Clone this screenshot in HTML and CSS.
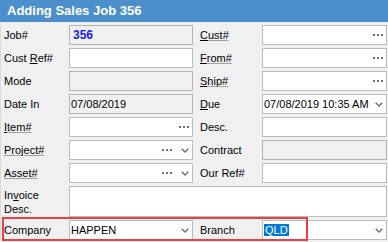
FILE: index.html
```html
<!DOCTYPE html>
<html lang="en">
<head>
    <meta charset="UTF-8">
    <title>Adding Sales Job 356</title>
    <link rel="stylesheet" href="styles.css">
</head>
<body>
    <div class="window">
        <div class="titlebar">Adding Sales Job 356</div>

        <div class="form">
            <!-- row 1 -->
            <div class="label"><span>Job#</span></div>
            <div class="field readonly"><span class="val job-no">356</span></div>
            <div class="label right"><span class="link"><u>C</u>ust#</span></div>
            <div class="field">
                <span class="val"></span>
                <svg class="dots" width="10" height="2"><rect x="0" y="0" width="2" height="2"/><rect x="4" y="0" width="2" height="2"/><rect x="8" y="0" width="2" height="2"/></svg>
            </div>

            <!-- row 2 -->
            <div class="label"><span>Cust <u>R</u>ef#</span></div>
            <div class="field"><span class="val"></span></div>
            <div class="label right"><span class="link"><u>F</u>rom#</span></div>
            <div class="field">
                <span class="val"></span>
                <svg class="dots" width="10" height="2"><rect x="0" y="0" width="2" height="2"/><rect x="4" y="0" width="2" height="2"/><rect x="8" y="0" width="2" height="2"/></svg>
            </div>

            <!-- row 3 -->
            <div class="label"><span>Mode</span></div>
            <div class="field readonly"><span class="val"></span></div>
            <div class="label right"><span class="link"><u>S</u>hip#</span></div>
            <div class="field">
                <span class="val"></span>
                <svg class="dots" width="10" height="2"><rect x="0" y="0" width="2" height="2"/><rect x="4" y="0" width="2" height="2"/><rect x="8" y="0" width="2" height="2"/></svg>
            </div>

            <!-- row 4 -->
            <div class="label"><span>Date In</span></div>
            <div class="field readonly"><span class="val">07/08/2019</span></div>
            <div class="label right"><span><u>D</u>ue</span></div>
            <div class="field">
                <span class="val">07/08/2019 10:35 AM</span>
                <svg class="chev tight" width="8" height="5"><polyline points="0.7,0.7 4,4 7.3,0.7"/></svg>
            </div>

            <!-- row 5 -->
            <div class="label"><span class="link"><u>I</u>tem#</span></div>
            <div class="field">
                <span class="val"></span>
                <svg class="dots" width="10" height="2"><rect x="0" y="0" width="2" height="2"/><rect x="4" y="0" width="2" height="2"/><rect x="8" y="0" width="2" height="2"/></svg>
            </div>
            <div class="label right"><span>Desc.</span></div>
            <div class="field"><span class="val"></span></div>

            <!-- row 6 -->
            <div class="label"><span class="link">Project#</span></div>
            <div class="field">
                <span class="val"></span>
                <svg class="dots" width="10" height="2"><rect x="0" y="0" width="2" height="2"/><rect x="4" y="0" width="2" height="2"/><rect x="8" y="0" width="2" height="2"/></svg>
                <svg class="chev" width="8" height="5"><polyline points="0.7,0.7 4,4 7.3,0.7"/></svg>
            </div>
            <div class="label right"><span>Contract</span></div>
            <div class="field readonly"><span class="val"></span></div>

            <!-- row 7 -->
            <div class="label"><span class="link">Asset#</span></div>
            <div class="field">
                <span class="val"></span>
                <svg class="dots" width="10" height="2"><rect x="0" y="0" width="2" height="2"/><rect x="4" y="0" width="2" height="2"/><rect x="8" y="0" width="2" height="2"/></svg>
                <svg class="chev" width="8" height="5"><polyline points="0.7,0.7 4,4 7.3,0.7"/></svg>
            </div>
            <div class="label right"><span>Our Ref#</span></div>
            <div class="field"><span class="val"></span></div>

            <!-- row 8 -->
            <div class="label multi">In<u>v</u>oice<br>Desc.</div>
            <div class="field memo"></div>

            <!-- row 9 -->
            <div class="label"><span>Company</span></div>
            <div class="field">
                <span class="val">HAPPEN</span>
                <svg class="chev" width="8" height="5"><polyline points="0.7,0.7 4,4 7.3,0.7"/></svg>
            </div>
            <div class="label right"><span>Branch</span></div>
            <div class="field">
                <span class="val"><span class="selected">QLD</span></span>
                <svg class="chev" width="8" height="5"><polyline points="0.7,0.7 4,4 7.3,0.7"/></svg>
            </div>
        </div>

        <div class="callout"></div>
    </div>
</body>
</html>
```

FILE: styles.css
```css
* {
    margin: 0;
    padding: 0;
    box-sizing: border-box;
}

body {
    font-family: "Liberation Sans", Arial, sans-serif;
    font-size: 11px;
    color: #000;
    background: #f0f0f0;
    width: 388px;
    height: 242px;
    overflow: hidden;
}

.window {
    position: relative;
    height: 242px;
}

.titlebar {
    height: 22px;
    background: #4b8fcc;
    color: #fff;
    font-weight: bold;
    font-size: 13px;
    line-height: 22px;
    padding-left: 7px;
}

.form {
    display: grid;
    grid-template-columns: 64px 124px 69px 125px;
    grid-template-rows: repeat(7, 20px) 31px 20px;
    row-gap: 3px;
    padding: 3px 2px 0 4px;
    border-left: 1px solid #dadada;
}

.label {
    display: flex;
    align-items: center;
    white-space: nowrap;
    margin-left: -1px;
}

.label.right {
    padding-left: 8px;
}

.label.multi {
    display: block;
    align-self: start;
    padding-top: 2px;
    line-height: 14px;
}

.link {
    text-decoration: underline;
    text-decoration-color: #a0a0a0;
}

.link u {
    text-decoration-color: #000;
}

.field {
    display: flex;
    align-items: center;
    height: 20px;
    background: #fff;
    border: 1px solid #bcbcbc;
    padding: 0 2px 0 1px;
    white-space: nowrap;
}

.field.readonly {
    background: #f0f0f0;
    border-color: #b4b4b4;
}

.field.memo {
    grid-column: 2 / 5;
    height: 31px;
}

.val {
    flex: 1;
}

.job-no {
    color: #1a1aee;
    font-weight: bold;
    font-size: 12px;
    padding-left: 2px;
}

.dots {
    fill: #707070;
    margin-right: 1px;
}

.chev {
    fill: none;
    stroke: #707070;
    stroke-width: 1.4;
    margin-left: 8px;
    margin-right: 1px;
}

.chev.tight {
    margin-left: 2px;
}

.selected {
    background: #0078d7;
    color: #fff;
    padding: 0 1px;
}

.callout {
    position: absolute;
    left: 2px;
    top: 217px;
    width: 306px;
    height: 24px;
    border: 2px solid #e8413f;
}
```
